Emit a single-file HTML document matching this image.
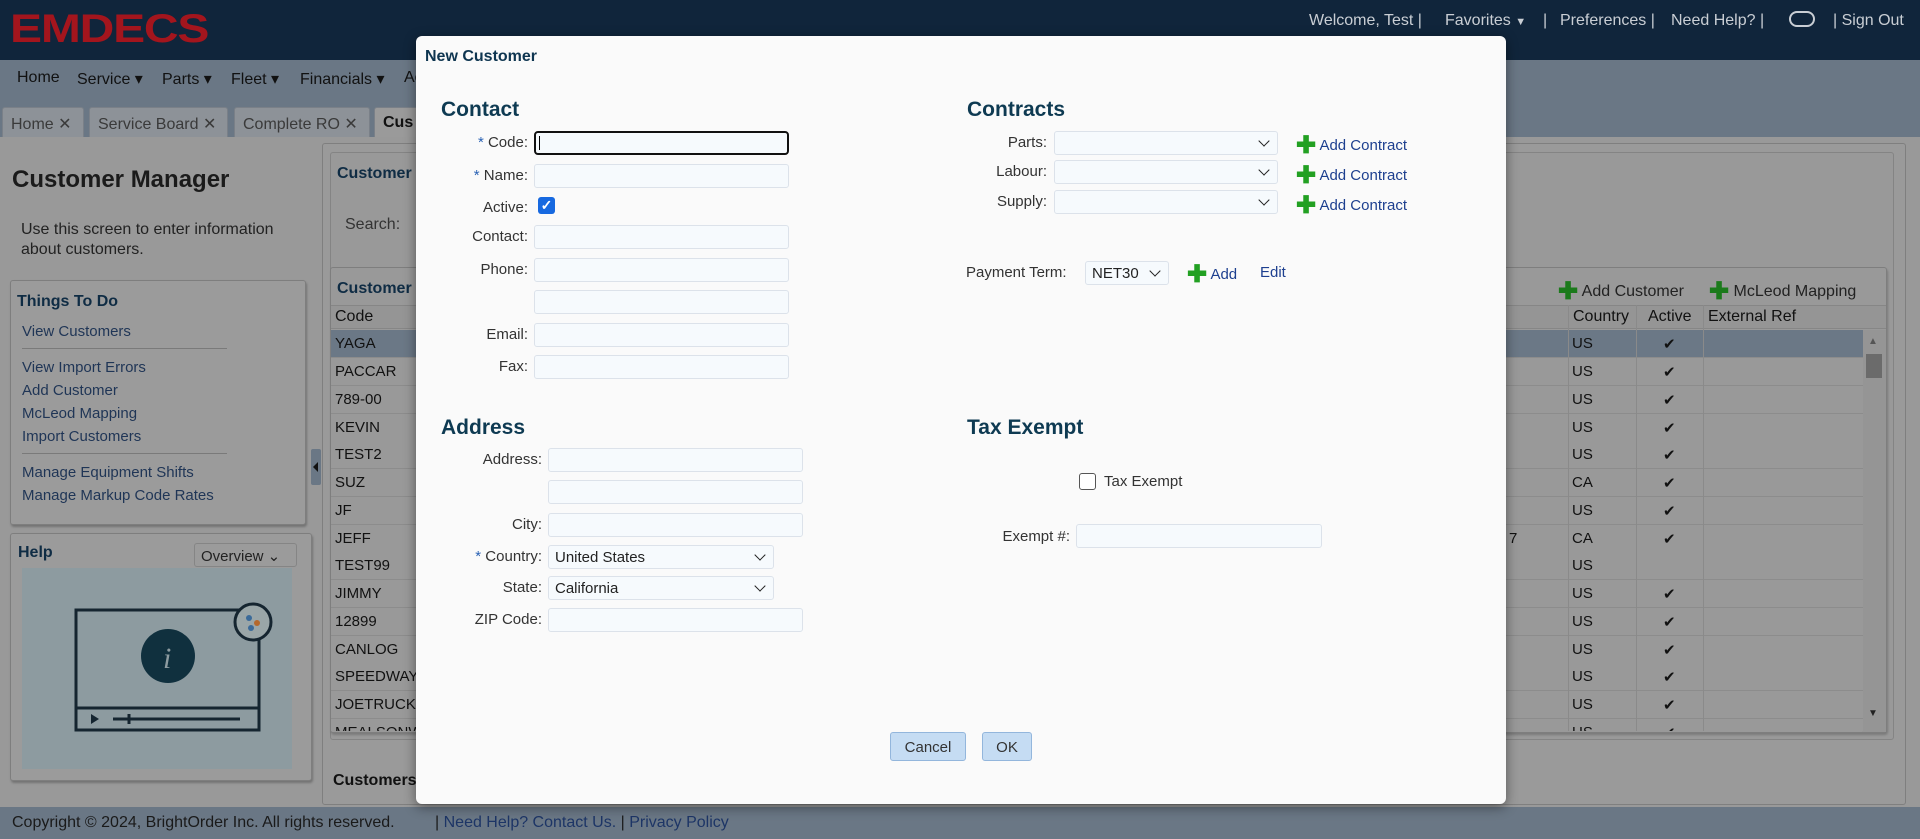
<!DOCTYPE html>
<html><head><meta charset="utf-8"><style>
*{box-sizing:border-box;margin:0;padding:0}
body{width:1920px;height:839px;overflow:hidden;position:relative;font-family:"Liberation Sans",sans-serif;font-size:15px;background:#999;color:#222}
.a{position:absolute;white-space:nowrap}
.hdr{left:0;top:0;width:1920px;height:60px;background:#10253b}
.logo{left:10px;top:7px;font-size:40px;font-weight:bold;color:#a3151d;letter-spacing:-1px;transform:scaleX(1.2);transform-origin:left}
.tr{color:#c9ced4;font-size:16px;top:12px}
.nav{left:0;top:60px;width:1920px;height:45px;background:#6a7785}
.nav span{position:absolute;top:9px;font-size:16px;color:#111}
.tabs{left:0;top:105px;width:1920px;height:32px;background:#6a7785}
.tab{position:absolute;top:2px;height:30px;background:#8d9298;border:1px solid #7a8088;border-bottom:none;border-radius:3px 3px 0 0;color:#3a3a3a;font-size:16px;padding:6px 0 0 8px}
.box{position:absolute;border:1px solid #7e7e7e;border-radius:3px;background:#9b9b9b;box-shadow:1px 2px 2px rgba(0,0,0,.25)}
.lk{position:absolute;left:21px;color:#1f3556;font-size:15px}
.sep{position:absolute;left:21px;width:205px;height:1px;background:#7a7a7a}
.row{position:absolute;left:331px;width:1532px;height:28px;border-bottom:1px solid #8c8c8c;font-size:15px;color:#111;background:#999}
.row span{position:absolute;top:5px}
.modal{left:416px;top:36px;width:1090px;height:768px;background:#fafafa;border-radius:6px;box-shadow:0 3px 12px rgba(0,0,0,.45)}
.m{position:absolute;white-space:nowrap}
.h{font-size:21px;font-weight:bold;color:#0e3a52}
.lb{font-size:15px;color:#333;text-align:right}
.in{position:absolute;height:24px;background:#f6fafd;border:1px solid #dce2ea;border-radius:3px}
.sel{position:absolute;height:24px;background:#f6fafd;border:1px solid #dce2ea;border-radius:3px;font-size:15px;color:#222;padding:3px 6px}
.sel:after{content:"";position:absolute;right:9px;top:5px;width:7px;height:7px;border-right:1.6px solid #222;border-bottom:1.6px solid #222;transform:rotate(45deg)}
.ac{position:absolute;font-size:15px;color:#1d3f8f}
.pl{color:#22a022;font-size:24px;font-weight:bold;vertical-align:-3px}
.btn{position:absolute;height:29px;background:#c5dcf3;border:1px solid #93b6dc;border-radius:3px;font-size:15px;color:#333;text-align:center;padding-top:6px}
.req{color:#2a62b4}
</style></head><body>
<div class="a hdr"></div>
<div class="a logo">EMDECS</div>
<div class="a tr" style="left:1309px">Welcome, Test |</div>
<div class="a tr" style="left:1445px">Favorites <span style="font-size:11px">▼</span></div>
<div class="a tr" style="left:1543px">|</div>
<div class="a tr" style="left:1560px">Preferences |</div>
<div class="a tr" style="left:1671px">Need Help? |</div>
<div class="a" style="left:1789px;top:11px;width:26px;height:16px;border:2px solid #c9ced4;border-radius:8px"></div>
<div class="a tr" style="left:1833px">| Sign Out</div>

<div class="a nav"><span style="left:17px">Home</span><span style="left:77px">Service ▾</span><span style="left:162px">Parts ▾</span><span style="left:231px">Fleet ▾</span><span style="left:300px">Financials ▾</span><span style="left:404px">Ac</span></div>
<div class="a tabs">
<div class="tab" style="left:2px;width:82px">Home ✕</div>
<div class="tab" style="left:89px;width:139px">Service Board ✕</div>
<div class="tab" style="left:234px;width:136px">Complete RO ✕</div>
<div class="tab" style="left:374px;width:60px;background:#9a9a9a;color:#111;font-weight:bold">Cus</div>
</div>

<div class="a" style="left:12px;top:166px;font-size:24px;font-weight:bold;color:#1b1b1b">Customer Manager</div>
<div class="a" style="left:21px;top:220px;font-size:16px;color:#222;line-height:20px;white-space:normal;width:280px">Use this screen to enter information about customers.</div>
<div class="box" style="left:10px;top:280px;width:296px;height:245px">
<div class="a" style="left:6px;top:12px;font-size:16px;font-weight:bold;color:#0f2c44">Things To Do</div>
<div class="lk" style="top:42px;left:11px">View Customers</div>
<div class="sep" style="top:67px;left:11px"></div>
<div class="lk" style="top:78px;left:11px">View Import Errors</div>
<div class="lk" style="top:101px;left:11px">Add Customer</div>
<div class="lk" style="top:124px;left:11px">McLeod Mapping</div>
<div class="lk" style="top:147px;left:11px">Import Customers</div>
<div class="sep" style="top:172px;left:11px"></div>
<div class="lk" style="top:183px;left:11px">Manage Equipment Shifts</div>
<div class="lk" style="top:206px;left:11px">Manage Markup Code Rates</div>
</div>
<div class="box" style="left:10px;top:533px;width:302px;height:248px">
<div class="a" style="left:7px;top:10px;font-size:16px;font-weight:bold;color:#0f2c44">Help</div>
<div class="a" style="left:183px;top:9px;width:103px;height:24px;border:1px solid #858585;border-radius:3px;font-size:15px;padding:3px 6px;color:#222">Overview ⌄</div>
<div class="a" style="left:11px;top:34px;width:270px;height:201px;background:#8d9ba0"></div>
<svg class="a" style="left:11px;top:34px" width="270" height="201"><rect x="54" y="42" width="183" height="120" fill="none" stroke="#152530" stroke-width="3"/><line x1="54" y1="140" x2="237" y2="140" stroke="#152530" stroke-width="3"/><path d="M69 146 l8 5 -8 5z" fill="#152530"/><line x1="91" y1="151" x2="218" y2="151" stroke="#152530" stroke-width="3"/><line x1="107" y1="146" x2="107" y2="156" stroke="#152530" stroke-width="3"/><circle cx="146" cy="88" r="27" fill="#10303e"/><text x="141" y="100" font-size="30" font-style="italic" fill="#8d9ba0" font-family="Liberation Serif">i</text><circle cx="231" cy="54" r="18" fill="#9aa6a8" stroke="#152530" stroke-width="3"/><circle cx="227" cy="50" r="3" fill="#3a6a99"/><circle cx="235" cy="55" r="3" fill="#b4682c"/><circle cx="229" cy="60" r="3" fill="#3a6a99"/></svg>
</div>
<div class="a" style="left:311px;top:449px;width:10px;height:36px;background:#6a7785;border-radius:2px"><div style="position:absolute;left:2px;top:13px;border-right:5px solid #111;border-top:5px solid transparent;border-bottom:5px solid transparent"></div></div>

<div class="a" style="left:322px;top:143px;width:1584px;height:662px;border:1px solid #7f7f7f;border-radius:3px;background:#9a9a9a"></div>
<div class="a" style="left:330px;top:152px;width:1564px;height:588px;border:1px solid #848484;border-radius:3px;background:#999"></div>
<div class="a" style="left:337px;top:165px;font-size:16px;font-weight:bold;color:#0f2c44">Customer</div>
<div class="a" style="left:345px;top:216px;font-size:16px;color:#333">Search:</div>
<div class="a" style="left:330px;top:267px;width:1557px;height:466px;border:1px solid #7e7e7e;border-radius:3px;background:#999;box-shadow:1px 2px 2px rgba(0,0,0,.2)"></div>
<div class="a" style="left:337px;top:280px;font-size:16px;font-weight:bold;color:#0f2c44">Customer</div>
<div class="a" style="left:1558px;top:277px;font-size:16px;color:#222"><span class="pl" style="color:#1b7a1b">✚</span> Add Customer</div>
<div class="a" style="left:1709px;top:277px;font-size:16px;color:#222"><span class="pl" style="color:#1b7a1b">✚</span> McLeod Mapping</div>
<div class="a" style="left:331px;top:305px;width:1555px;height:24px;background:#959595;border-top:1px solid #868686;border-bottom:1px solid #868686"></div>
<div class="a" style="left:335px;top:308px;font-size:16px;color:#111">Code</div>
<div class="a" style="left:1573px;top:308px;font-size:16px;color:#111">Country</div>
<div class="a" style="left:1648px;top:308px;font-size:16px;color:#111">Active</div>
<div class="a" style="left:1708px;top:308px;font-size:16px;color:#111">External Ref</div>
<div class="a" style="left:1862px;top:330px;width:24px;height:402px;background:#959595"></div>
<div class="a" style="left:1866px;top:354px;width:16px;height:24px;background:#6b6b6b"></div>
<div class="a" style="left:1868px;top:336px;font-size:10px;color:#555">▲</div>
<div class="a" style="left:1868px;top:708px;font-size:10px;color:#222">▼</div>
<div class="row" style="top:330px;background:#6b7886"><span style="left:4px">YAGA</span><span style="left:1241px">US</span><span style="left:1332px">✔</span></div>
<div class="row" style="top:358px"><span style="left:4px">PACCAR</span><span style="left:1241px">US</span><span style="left:1332px">✔</span></div>
<div class="row" style="top:386px"><span style="left:4px">789-00</span><span style="left:1241px">US</span><span style="left:1332px">✔</span></div>
<div class="row" style="top:414px"><span style="left:4px">KEVIN</span><span style="left:1241px">US</span><span style="left:1332px">✔</span></div>
<div class="row" style="top:441px"><span style="left:4px">TEST2</span><span style="left:1241px">US</span><span style="left:1332px">✔</span></div>
<div class="row" style="top:469px"><span style="left:4px">SUZ</span><span style="left:1241px">CA</span><span style="left:1332px">✔</span></div>
<div class="row" style="top:497px"><span style="left:4px">JF</span><span style="left:1241px">US</span><span style="left:1332px">✔</span></div>
<div class="row" style="top:525px"><span style="left:4px">JEFF</span><span style="left:1178px">7</span><span style="left:1241px">CA</span><span style="left:1332px">✔</span></div>
<div class="row" style="top:552px"><span style="left:4px">TEST99</span><span style="left:1241px">US</span></div>
<div class="row" style="top:580px"><span style="left:4px">JIMMY</span><span style="left:1241px">US</span><span style="left:1332px">✔</span></div>
<div class="row" style="top:608px"><span style="left:4px">12899</span><span style="left:1241px">US</span><span style="left:1332px">✔</span></div>
<div class="row" style="top:636px"><span style="left:4px">CANLOG</span><span style="left:1241px">US</span><span style="left:1332px">✔</span></div>
<div class="row" style="top:663px"><span style="left:4px">SPEEDWAY</span><span style="left:1241px">US</span><span style="left:1332px">✔</span></div>
<div class="row" style="top:691px"><span style="left:4px">JOETRUCK</span><span style="left:1241px">US</span><span style="left:1332px">✔</span></div>
<div class="row" style="top:719px;height:12px;overflow:hidden;border:none"><span style="left:4px">MEALSONW</span><span style="left:1241px">US</span><span style="left:1332px">✔</span></div>
<div class="a" style="left:1568px;top:305px;width:1px;height:426px;background:#8a8a8a"></div>
<div class="a" style="left:1636px;top:305px;width:1px;height:426px;background:#8a8a8a"></div>
<div class="a" style="left:1703px;top:305px;width:1px;height:426px;background:#8a8a8a"></div>
<div class="a" style="left:333px;top:772px;font-size:16px;font-weight:bold;color:#111">Customers</div>

<div class="a" style="left:0;top:807px;width:1920px;height:32px;background:#6a7785"></div>
<div class="a" style="left:12px;top:814px;font-size:16px;color:#1a1a1a">Copyright © 2024, BrightOrder Inc. All rights reserved.</div>
<div class="a" style="left:435px;top:814px;font-size:16px;color:#1a1a1a">| <span style="color:#1d3566">Need Help? Contact Us.</span> | <span style="color:#1d3566">Privacy Policy</span></div>

<div class="a modal">
<div class="m" style="left:9px;top:12px;font-size:16px;font-weight:bold;color:#0e3550">New Customer</div>
<div class="m h" style="left:25px;top:62px">Contact</div>
<div class="m lb" style="right:978px;top:98px"><span class="req">*</span> Code:</div>
<div class="in" style="left:118px;top:95px;width:255px;border:2px solid #111;border-radius:4px"><div style="position:absolute;left:3px;top:3px;width:1px;height:14px;background:#000"></div></div>
<div class="m lb" style="right:978px;top:131px"><span class="req">*</span> Name:</div>
<div class="in" style="left:118px;top:128px;width:255px"></div>
<div class="m lb" style="right:978px;top:163px">Active:</div>
<div class="m" style="left:122px;top:161px;width:17px;height:17px;background:#1769e0;border-radius:3px;color:#fff;font-size:14px;font-weight:bold;text-align:center;line-height:17px">✓</div>
<div class="m lb" style="right:978px;top:192px">Contact:</div>
<div class="in" style="left:118px;top:189px;width:255px"></div>
<div class="m lb" style="right:978px;top:225px">Phone:</div>
<div class="in" style="left:118px;top:222px;width:255px"></div>
<div class="in" style="left:118px;top:254px;width:255px"></div>
<div class="m lb" style="right:978px;top:290px">Email:</div>
<div class="in" style="left:118px;top:287px;width:255px"></div>
<div class="m lb" style="right:978px;top:322px">Fax:</div>
<div class="in" style="left:118px;top:319px;width:255px"></div>

<div class="m h" style="left:551px;top:62px">Contracts</div>
<div class="m lb" style="right:459px;top:98px">Parts:</div>
<div class="sel" style="left:638px;top:95px;width:224px"></div>
<div class="ac" style="left:880px;top:95px"><span class="pl">✚</span> Add Contract</div>
<div class="m lb" style="right:459px;top:127px">Labour:</div>
<div class="sel" style="left:638px;top:124px;width:224px"></div>
<div class="ac" style="left:880px;top:125px"><span class="pl">✚</span> Add Contract</div>
<div class="m lb" style="right:459px;top:157px">Supply:</div>
<div class="sel" style="left:638px;top:154px;width:224px"></div>
<div class="ac" style="left:880px;top:155px"><span class="pl">✚</span> Add Contract</div>
<div class="m lb" style="left:550px;top:228px">Payment Term:</div>
<div class="sel" style="left:669px;top:225px;width:84px">NET30</div>
<div class="ac" style="left:771px;top:224px"><span class="pl">✚</span> Add</div>
<div class="ac" style="left:844px;top:228px">Edit</div>

<div class="m h" style="left:25px;top:380px">Address</div>
<div class="m lb" style="right:964px;top:415px">Address:</div>
<div class="in" style="left:132px;top:412px;width:255px"></div>
<div class="in" style="left:132px;top:444px;width:255px"></div>
<div class="m lb" style="right:964px;top:480px">City:</div>
<div class="in" style="left:132px;top:477px;width:255px"></div>
<div class="m lb" style="right:964px;top:512px"><span class="req">*</span> Country:</div>
<div class="sel" style="left:132px;top:509px;width:226px">United States</div>
<div class="m lb" style="right:964px;top:543px">State:</div>
<div class="sel" style="left:132px;top:540px;width:226px">California</div>
<div class="m lb" style="right:964px;top:575px">ZIP Code:</div>
<div class="in" style="left:132px;top:572px;width:255px"></div>

<div class="m h" style="left:551px;top:380px">Tax Exempt</div>
<div class="m" style="left:663px;top:437px;width:17px;height:17px;border:1.5px solid #555;border-radius:3px;background:#fff"></div>
<div class="m lb" style="left:688px;top:437px">Tax Exempt</div>
<div class="m lb" style="right:436px;top:492px">Exempt #:</div>
<div class="in" style="left:660px;top:488px;width:246px"></div>

<div class="btn" style="left:474px;top:696px;width:76px">Cancel</div>
<div class="btn" style="left:566px;top:696px;width:50px">OK</div>
</div>
</body></html>
